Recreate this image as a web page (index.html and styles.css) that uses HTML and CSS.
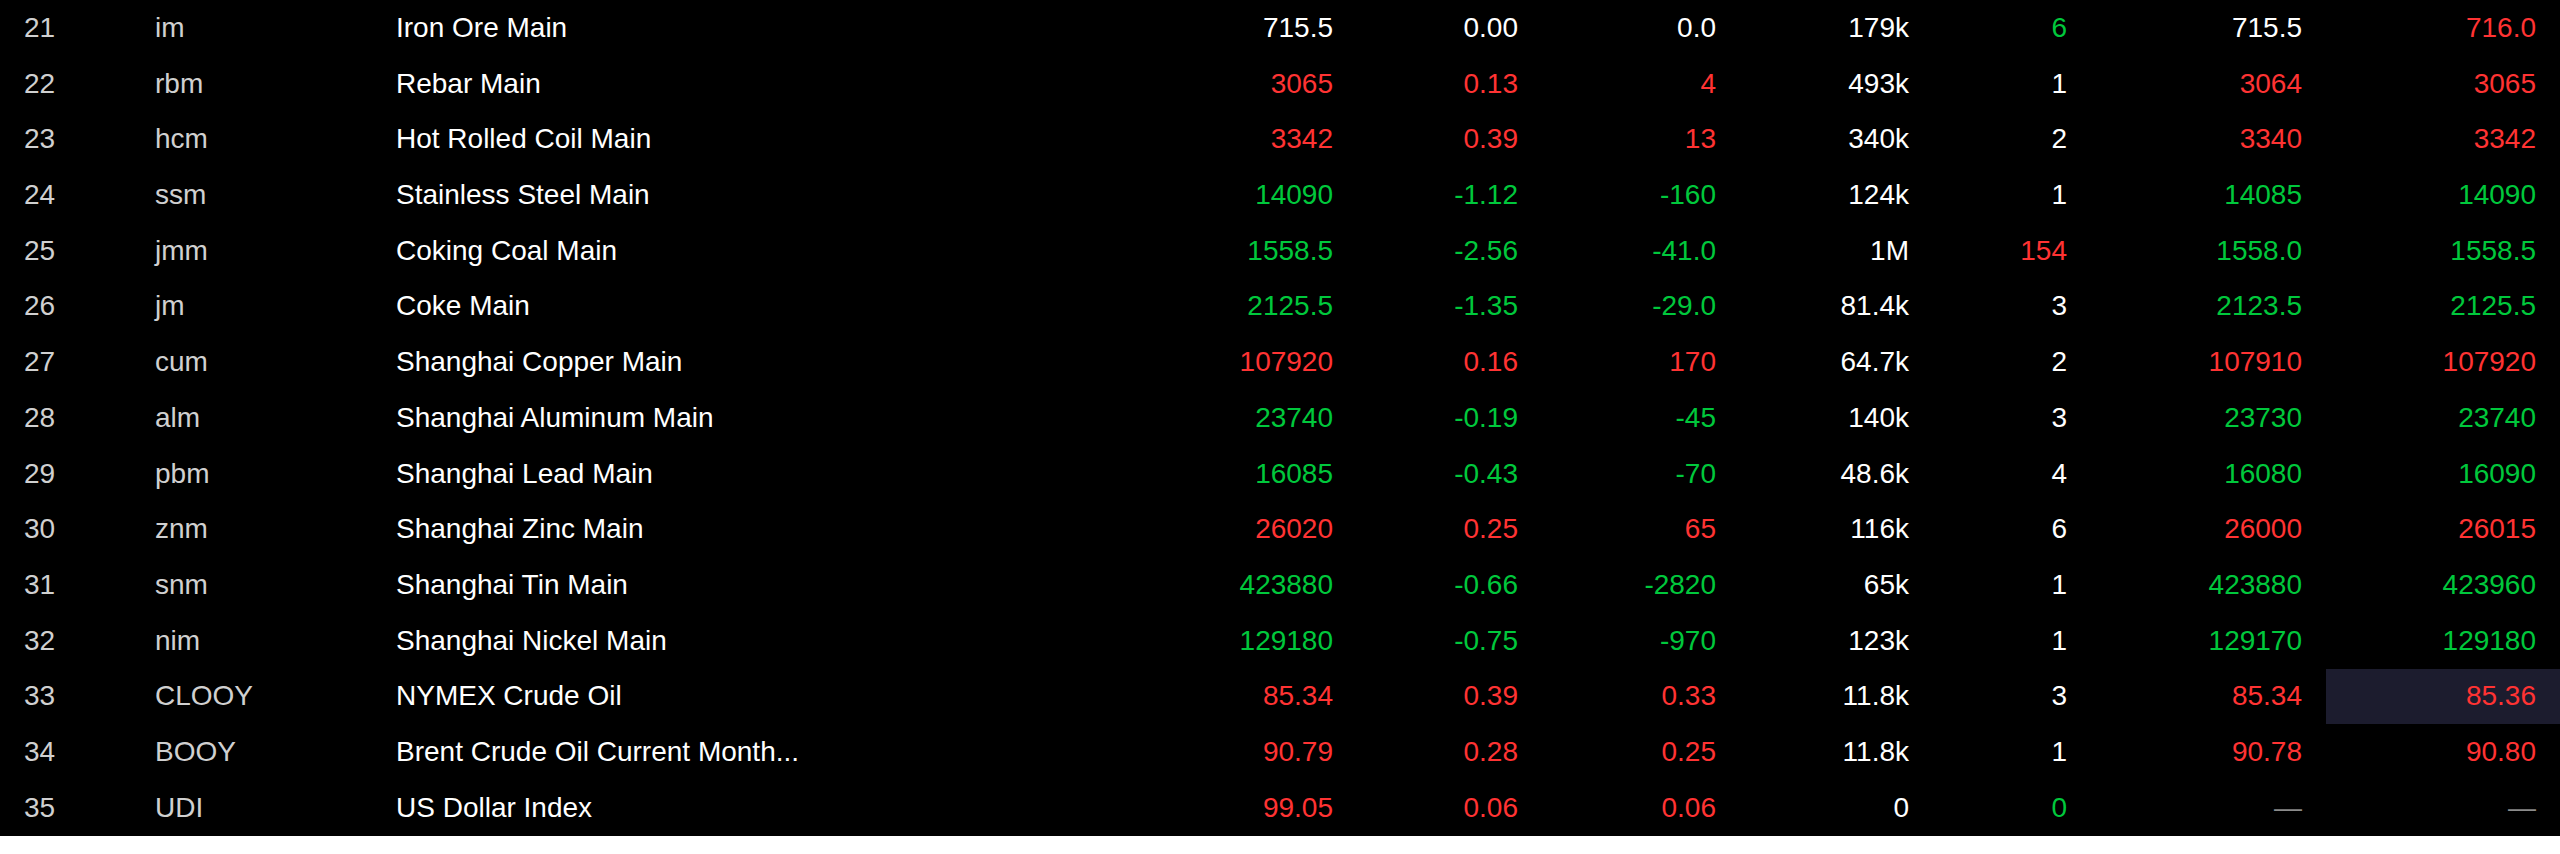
FILE: index.html
```html
<!DOCTYPE html>
<html lang="en">
<head>
<meta charset="utf-8">
<title>Quotes</title>
<link rel="stylesheet" href="styles.css">
</head>
<body>
<div class="table">
  <div class="row"><span class="idx">21</span><span class="code">im</span><span class="name">Iron Ore Main</span><span class="num">715.5</span><span class="num">0.00</span><span class="num">0.0</span><span class="num">179k</span><span class="num up-g">6</span><span class="num">715.5</span><span class="num up">716.0</span></div>
  <div class="row"><span class="idx">22</span><span class="code">rbm</span><span class="name">Rebar Main</span><span class="num up">3065</span><span class="num up">0.13</span><span class="num up">4</span><span class="num">493k</span><span class="num">1</span><span class="num up">3064</span><span class="num up">3065</span></div>
  <div class="row"><span class="idx">23</span><span class="code">hcm</span><span class="name">Hot Rolled Coil Main</span><span class="num up">3342</span><span class="num up">0.39</span><span class="num up">13</span><span class="num">340k</span><span class="num">2</span><span class="num up">3340</span><span class="num up">3342</span></div>
  <div class="row"><span class="idx">24</span><span class="code">ssm</span><span class="name">Stainless Steel Main</span><span class="num down">14090</span><span class="num down">-1.12</span><span class="num down">-160</span><span class="num">124k</span><span class="num">1</span><span class="num down">14085</span><span class="num down">14090</span></div>
  <div class="row"><span class="idx">25</span><span class="code">jmm</span><span class="name">Coking Coal Main</span><span class="num down">1558.5</span><span class="num down">-2.56</span><span class="num down">-41.0</span><span class="num">1M</span><span class="num up">154</span><span class="num down">1558.0</span><span class="num down">1558.5</span></div>
  <div class="row"><span class="idx">26</span><span class="code">jm</span><span class="name">Coke Main</span><span class="num down">2125.5</span><span class="num down">-1.35</span><span class="num down">-29.0</span><span class="num">81.4k</span><span class="num">3</span><span class="num down">2123.5</span><span class="num down">2125.5</span></div>
  <div class="row"><span class="idx">27</span><span class="code">cum</span><span class="name">Shanghai Copper Main</span><span class="num up">107920</span><span class="num up">0.16</span><span class="num up">170</span><span class="num">64.7k</span><span class="num">2</span><span class="num up">107910</span><span class="num up">107920</span></div>
  <div class="row"><span class="idx">28</span><span class="code">alm</span><span class="name">Shanghai Aluminum Main</span><span class="num down">23740</span><span class="num down">-0.19</span><span class="num down">-45</span><span class="num">140k</span><span class="num">3</span><span class="num down">23730</span><span class="num down">23740</span></div>
  <div class="row"><span class="idx">29</span><span class="code">pbm</span><span class="name">Shanghai Lead Main</span><span class="num down">16085</span><span class="num down">-0.43</span><span class="num down">-70</span><span class="num">48.6k</span><span class="num">4</span><span class="num down">16080</span><span class="num down">16090</span></div>
  <div class="row"><span class="idx">30</span><span class="code">znm</span><span class="name">Shanghai Zinc Main</span><span class="num up">26020</span><span class="num up">0.25</span><span class="num up">65</span><span class="num">116k</span><span class="num">6</span><span class="num up">26000</span><span class="num up">26015</span></div>
  <div class="row"><span class="idx">31</span><span class="code">snm</span><span class="name">Shanghai Tin Main</span><span class="num down">423880</span><span class="num down">-0.66</span><span class="num down">-2820</span><span class="num">65k</span><span class="num">1</span><span class="num down">423880</span><span class="num down">423960</span></div>
  <div class="row"><span class="idx">32</span><span class="code">nim</span><span class="name">Shanghai Nickel Main</span><span class="num down">129180</span><span class="num down">-0.75</span><span class="num down">-970</span><span class="num">123k</span><span class="num">1</span><span class="num down">129170</span><span class="num down">129180</span></div>
  <div class="row"><span class="idx">33</span><span class="code">CLOOY</span><span class="name">NYMEX Crude Oil</span><span class="num up">85.34</span><span class="num up">0.39</span><span class="num up">0.33</span><span class="num">11.8k</span><span class="num">3</span><span class="num up">85.34</span><span class="num up hl">85.36</span></div>
  <div class="row"><span class="idx">34</span><span class="code">BOOY</span><span class="name">Brent Crude Oil Current Month...</span><span class="num up">90.79</span><span class="num up">0.28</span><span class="num up">0.25</span><span class="num">11.8k</span><span class="num">1</span><span class="num up">90.78</span><span class="num up">90.80</span></div>
  <div class="row"><span class="idx">35</span><span class="code">UDI</span><span class="name">US Dollar Index</span><span class="num up">99.05</span><span class="num up">0.06</span><span class="num up">0.06</span><span class="num">0</span><span class="num down">0</span><span class="num dash">—</span><span class="num dash">—</span></div>
</div>
</body>
</html>
```

FILE: styles.css
```css
html, body {
  margin: 0;
  padding: 0;
  background: #ffffff;
}

.table {
  background: #000000;
  font-family: "Liberation Sans", Arial, sans-serif;
  font-size: 28px;
  color: #ffffff;
}

.row {
  display: grid;
  grid-template-columns: 131px 241px 600px 385px 185px 198px 193px 158px 235px 234px;
  height: 55.73px;
}

.row > span {
  display: flex;
  align-items: center;
  padding: 0 24px;
  white-space: nowrap;
  overflow: hidden;
}

.idx,
.code {
  color: #d0d0d0;
}

.name {
  color: #ffffff;
}

.num {
  justify-content: flex-end;
}

.up {
  color: #ff3333;
}

.down,
.up-g {
  color: #00c83c;
}

.dash {
  color: #8c8c8c;
}

.hl {
  background: #1c1c2e;
}
```
